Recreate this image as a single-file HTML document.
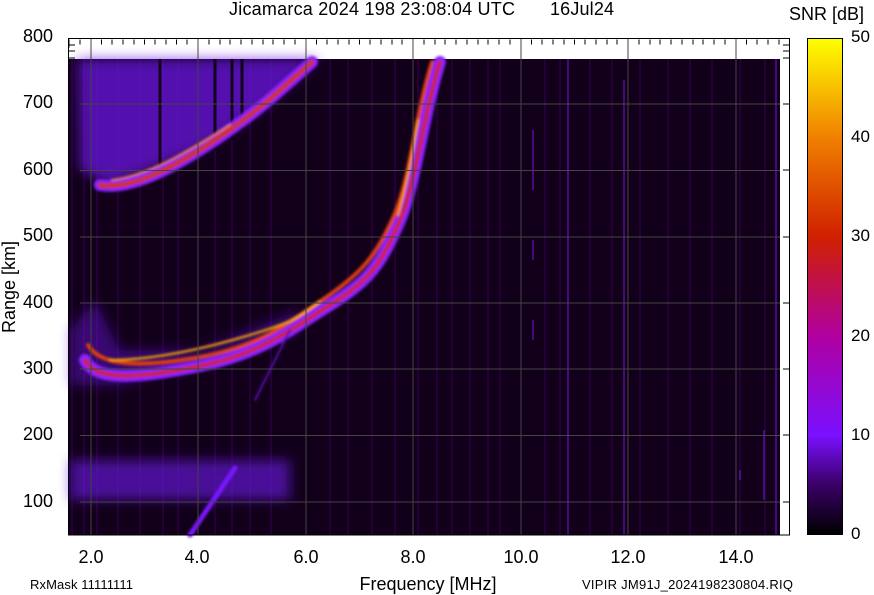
<!DOCTYPE html>
<html><head><meta charset="utf-8"><style>
html,body{margin:0;padding:0;background:#fff;width:874px;height:595px;overflow:hidden}
svg{display:block;font-family:"Liberation Sans",sans-serif}
</style></head><body>
<svg width="874" height="595" viewBox="0 0 874 595" xmlns="http://www.w3.org/2000/svg">
<defs>
<linearGradient id="cb" x1="0" y1="1" x2="0" y2="0">
<stop offset="0" stop-color="#000"/>
<stop offset="0.1" stop-color="#3a0066"/>
<stop offset="0.2" stop-color="#7a10ff"/>
<stop offset="0.4" stop-color="#b000a0"/>
<stop offset="0.6" stop-color="#d02000"/>
<stop offset="0.8" stop-color="#f08000"/>
<stop offset="1" stop-color="#ffff00"/>
</linearGradient>
<filter id="bl"><feGaussianBlur stdDeviation="1.2"/></filter>
<filter id="bl2"><feGaussianBlur stdDeviation="6"/></filter>
</defs>
<rect x="68" y="38" width="722" height="497" fill="#fff"/>
<rect x="68" y="59" width="712" height="476" fill="#12001a"/>
<!-- noise stripes -->
<g stroke="#4a0070" stroke-width="2" opacity="0.35">
<path d="M72 59V535M84 59V535M97 59V535M118 59V535M140 59V535M163 59V535M178 59V535M215 59V535M232 59V535M250 59V535M271 59V535M330 59V535M348 59V535M372 59V535M395 59V535M418 59V535M437 59V535M452 59V535M470 59V535M488 59V535M500 59V535M545 59V535M560 59V535M590 59V535M612 59V535M640 59V535M668 59V535M690 59V535M712 59V535M740 59V535M765 59V535"/>
</g>
<g stroke="#6a10c0" stroke-width="2" opacity="0.6">
<path d="M533 130V190M533 240V260M533 320V340M568 59V535M624 80V535M776 59V535M764 430V500M740 470V480"/>
</g>
<!-- purple clouds -->
<g filter="url(#bl2)" fill="#6a18e0" opacity="0.75">
<path d="M78 59H320L300 75L260 110L200 150L150 170L110 185L80 170Z"/>
<path d="M70 460H290V500H70Z" opacity="0.85"/>
<path d="M70 330L95 300L120 350L200 350L300 310L300 330L120 385L70 385Z" opacity="0.6"/>
</g>
<g stroke="#12001a" stroke-width="3"><path d="M160 59V180M232 59V140M242 59V130M215 59V150"/></g>
<!-- traces -->
<g fill="none" stroke-linecap="round" filter="url(#bl)">
<path d="M100 185C130 190 170 170 215 140S280 90 312 62" stroke="#8a20ff" stroke-width="12"/>
<path d="M100 185C130 190 170 170 215 140S280 90 312 62" stroke="#d03010" stroke-width="5"/>
<path d="M112 180C150 175 190 150 230 125" stroke="#f08000" stroke-width="2"/>
<path d="M85 360C95 382 140 378 200 366S290 330 330 305S380 265 398 225S422 120 440 62" stroke="#8a20ff" stroke-width="12"/>
<path d="M88 345C100 366 140 368 200 357S290 322 325 298S375 258 393 218S414 120 432 62" stroke="#e04010" stroke-width="4"/>
<path d="M85 360C95 382 140 378 200 366S290 330 330 305S380 265 398 225S422 120 440 62" stroke="#d02000" stroke-width="4"/>
<path d="M110 360C150 360 200 350 250 335S300 315 320 302" stroke="#ffb000" stroke-width="2"/>
<path d="M398 215C408 180 413 150 418 120" stroke="#ffa000" stroke-width="2"/>
<path d="M190 535L235 468" stroke="#7a18ff" stroke-width="5"/>
<path d="M255 400L290 330" stroke="#5a10b0" stroke-width="2"/>
</g>
<!-- grid -->
<g stroke="#444" stroke-width="1">
<path d="M91 38V535M198 38V535M306 38V535M413 38V535M521 38V535M628 38V535M736 38V535"/>
<path d="M80 104H780M80 170.5H780M80 237H780M80 303H780M80 369H780M80 435.5H780M80 502H780"/>
</g>
<g stroke="#000" stroke-width="1">
<path d="M69 39.5v8M80 39.5v5M101.5 39.5v5M112 39.5v5M123 39.5v5M134 39.5v5M144.5 39.5v5M155 39.5v5M166 39.5v5M176.5 39.5v5M187 39.5v5M209 39.5v5M220 39.5v5M230 39.5v5M241 39.5v5M252 39.5v5M263 39.5v5M273 39.5v5M284 39.5v5M295 39.5v5M316.5 39.5v5M327 39.5v5M338 39.5v5M349 39.5v5M359.5 39.5v5M370 39.5v5M381 39.5v5M392 39.5v5M402 39.5v5M424 39.5v5M435 39.5v5M445 39.5v5M456 39.5v5M467 39.5v5M478 39.5v5M488 39.5v5M499 39.5v5M510 39.5v5M531.5 39.5v5M542 39.5v5M553 39.5v5M564 39.5v5M574.5 39.5v5M585 39.5v5M596 39.5v5M607 39.5v5M617 39.5v5M639 39.5v5M650 39.5v5M660 39.5v5M671 39.5v5M682 39.5v5M693 39.5v5M703 39.5v5M714 39.5v5M725 39.5v5M746.5 39.5v5M757 39.5v5M768 39.5v5M779 39.5v5"/>
<path d="M69 45h6M69 51h6M69 58h6M783 45h6M783 51h6M783 58h6M783 104h6M783 170h6M783 237h6M783 303h6M783 369h6M783 435h6M783 502h6"/>
</g>
<rect x="68.5" y="38.5" width="721" height="496.5" fill="none" stroke="#000"/>
<!-- colorbar -->
<rect x="807.5" y="38.5" width="35" height="496" fill="url(#cb)" stroke="#000"/>
<g font-size="18" fill="#000">
<text x="229" y="15" textLength="286">Jicamarca 2024 198 23:08:04 UTC</text>
<text x="550" y="15" textLength="64">16Jul24</text>
<text x="789" y="20" textLength="75">SNR [dB]</text>
</g>
<g font-size="17" fill="#000">
<text x="851" y="42">50</text><text x="851" y="142">40</text><text x="851" y="241">30</text><text x="851" y="341">20</text><text x="851" y="440">10</text><text x="851" y="539">0</text>
</g>
<g font-size="18" fill="#000" text-anchor="end">
<text x="53" y="42">800</text><text x="53" y="108">700</text><text x="53" y="175">600</text><text x="53" y="241">500</text><text x="53" y="308">400</text><text x="53" y="374">300</text><text x="53" y="440">200</text><text x="53" y="507">100</text>
</g>
<g font-size="18" fill="#000" text-anchor="middle">
<text x="91" y="563">2.0</text><text x="197" y="563">4.0</text><text x="306" y="563">6.0</text><text x="413" y="563">8.0</text><text x="521" y="563">10.0</text><text x="628" y="563">12.0</text><text x="736" y="563">14.0</text>
<text x="428" y="590">Frequency [MHz]</text>
<text transform="translate(15,287) rotate(-90)">Range [km]</text>
</g>
<g font-size="13" fill="#000">
<text x="30" y="589" textLength="103">RxMask 11111111</text>
<text x="582" y="589" textLength="211">VIPIR  JM91J_2024198230804.RIQ</text>
</g>
</svg>
</body></html>
